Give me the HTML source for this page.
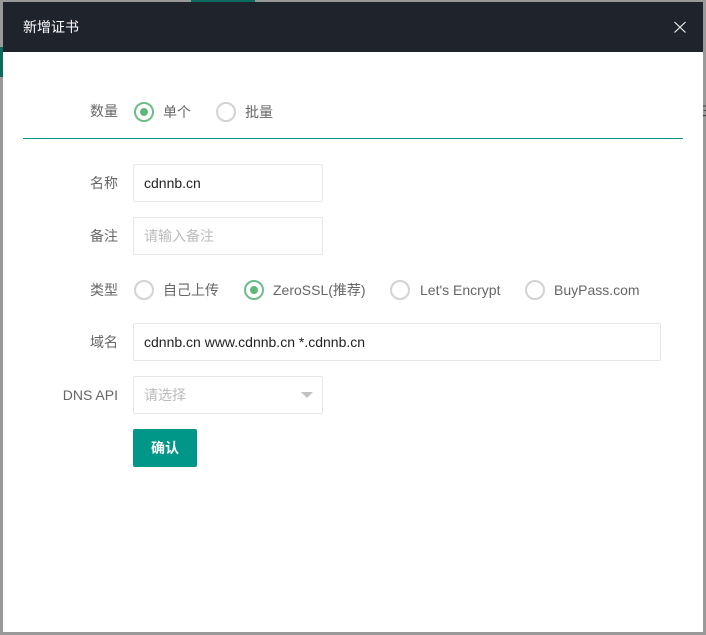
<!DOCTYPE html>
<html lang="zh"><head><meta charset="utf-8"><style>
html,body{margin:0;padding:0;width:706px;height:635px;overflow:hidden;background:#999;font-family:"Liberation Sans","Noto Sans CJK SC",sans-serif;font-size:14px;color:#666}
.a{position:absolute;white-space:nowrap}
.m{left:3px;top:2px;width:700px;height:630px;background:#fff}
.h{left:3px;top:2px;width:700px;height:50px;background:#1f232b}
.l{width:100px;left:18px;text-align:right;line-height:20px}
.r{width:16px;height:16px;border:2px solid #d2d2d2;border-radius:50%;background:#fff}
.r.on{border-color:#6dbd8a}
.r.on:after{content:"";position:absolute;left:4px;top:4px;width:8px;height:8px;border-radius:50%;background:#5fb878}
.t{line-height:20px}
.i{box-sizing:border-box;height:38px;border:1px solid #e6e6e6;border-radius:2px;background:#fff;line-height:36px;padding-left:10px;color:#222}
.p{color:#bbb}
</style></head><body>
<div class="a" style="left:191px;top:0;width:64px;height:2px;background:#0b6b5f"></div>
<div class="a" style="left:0;top:47px;width:3px;height:30px;background:#0b6b5f"></div>
<div class="a" style="left:701px;top:101px;line-height:20px;color:#444">三</div>
<div class="a m"></div>
<div class="a h"></div>
<div class="a" style="left:23px;top:17px;line-height:20px;color:#fff;font-size:14px">新增证书</div>
<svg class="a" style="left:674px;top:21px" width="12" height="12" viewBox="0 0 12 12"><path d="M.5 1l11 10.500M11.500 1l-11 10.500" stroke="#eee" stroke-width="1.200" fill="none"/></svg>

<div class="a l" style="top:101px">数量</div>
<div class="a r on" style="left:134px;top:102px"></div>
<div class="a t" style="left:163px;top:102px">单个</div>
<div class="a r" style="left:216px;top:102px"></div>
<div class="a t" style="left:245px;top:102px">批量</div>
<div class="a" style="left:23px;top:138px;width:660px;height:1px;background:#009688"></div>

<div class="a l" style="top:173px">名称</div>
<div class="a i" style="left:133px;top:164px;width:190px">cdnnb.cn</div>

<div class="a l" style="top:226px">备注</div>
<div class="a i p" style="left:133px;top:217px;width:190px">请输入备注</div>

<div class="a l" style="top:280px">类型</div>
<div class="a r" style="left:134px;top:280px"></div>
<div class="a t" style="left:163px;top:280px">自己上传</div>
<div class="a r on" style="left:244px;top:280px"></div>
<div class="a t" style="left:273px;top:280px">ZeroSSL(推荐)</div>
<div class="a r" style="left:390px;top:280px"></div>
<div class="a t" style="left:420px;top:280px">Let's Encrypt</div>
<div class="a r" style="left:525px;top:280px"></div>
<div class="a t" style="left:554px;top:280px">BuyPass.com</div>

<div class="a l" style="top:332px">域名</div>
<div class="a i" style="left:133px;top:323px;width:528px">cdnnb.cn www.cdnnb.cn *.cdnnb.cn</div>

<div class="a l" style="top:385px">DNS API</div>
<div class="a i p" style="left:133px;top:376px;width:190px">请选择</div>
<div class="a" style="left:301px;top:392px;width:0;height:0;border-left:6px solid transparent;border-right:6px solid transparent;border-top:6px solid #c2c2c2"></div>

<div class="a" style="left:133px;top:429px;width:64px;height:38px;background:#009688;border-radius:2px;color:#fff;text-align:center;line-height:38px;font-weight:bold">确认</div>
</body></html>
